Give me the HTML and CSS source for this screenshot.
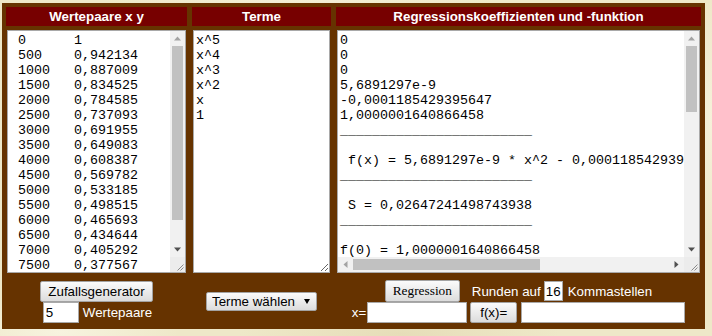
FILE: index.html
```html
<!DOCTYPE html>
<html lang="de">
<head>
    <meta charset="UTF-8">
    <title>Regression</title>
    <link rel="stylesheet" href="styles.css">
</head>
<body>
    <div class="panel">
        <div class="head">Wertepaare x y</div>
        <div class="head">Terme</div>
        <div class="head">Regressionskoeffizienten und -funktion</div>

        <div class="box">
            <div class="frame frame-werte">
                <textarea id="werte" wrap="off">
 0&#9;1
 500&#9;0,942134
 1000&#9;0,887009
 1500&#9;0,834525
 2000&#9;0,784585
 2500&#9;0,737093
 3000&#9;0,691955
 3500&#9;0,649083
 4000&#9;0,608387
 4500&#9;0,569782
 5000&#9;0,533185
 5500&#9;0,498515
 6000&#9;0,465693
 6500&#9;0,434644
 7000&#9;0,405292
 7500&#9;0,377567
 8000&#9;0,351403
</textarea>
                <div class="vbar">
                    <span class="sb-btn"><svg width="15" height="15"><path d="M4 9.5h7L7.5 5.5z" fill="#a3a3a3"/></svg></span>
                    <span class="sb-track"><span class="sb-thumb" style="height: 174px"></span></span>
                    <span class="sb-btn"><svg width="15" height="15"><path d="M4 5.5h7L7.5 9.5z" fill="#505050"/></svg></span>
                    <span class="sb-corner"><svg width="15" height="15"><path d="M13.5 7.5l-6 6M13.5 10.5l-3 3" stroke="#8a8a8a" stroke-width="1"/></svg></span>
                </div>
            </div>
        </div>
        <div class="box">
            <textarea id="terme" class="plain" wrap="off">
x^5
x^4
x^3
x^2
x
1</textarea>
        </div>
        <div class="box">
            <div class="frame frame-ergebnis">
                <textarea id="ergebnis" wrap="off">
0
0
0
5,6891297e-9
-0,0001185429395647
1,0000001640866458
________________________

 f(x) = 5,6891297e-9 * x^2 - 0,0001185429395647 * x + 1,0000001640866458
________________________

 S = 0,02647241498743938
________________________

f(0) = 1,0000001640866458
f(250) = 0,97071999
f(500) = 0,94215097
f(750) = 0,91429310
f(1000) = 0,88714635
f(1250) = 0,86071075
f(1500) = 0,83498629
f(1750) = 0,80997298
f(2000) = 0,78567080
f(2250) = 0,76207977
f(2500) = 0,73919987
f(2750) = 0,71703113
f(3000) = 0,69557351
f(3250) = 0,67482705
f(3500) = 0,65479171
f(3750) = 0,63546753
f(4000) = 0,61685448
f(4250) = 0,59895259
f(4500) = 0,58176182
f(4750) = 0,56528220
f(5000) = 0,54951370
f(5250) = 0,53445636
f(5500) = 0,52011016
f(5750) = 0,50647511
f(6000) = 0,49355119
f(6250) = 0,48133842
f(6500) = 0,46983679
f(6750) = 0,45904631
f(7000) = 0,44896694
f(7250) = 0,43959872
f(7500) = 0,43094166
f(7750) = 0,42299575
f(8000) = 0,41576094</textarea>
                <div class="vbar">
                    <span class="sb-btn"><svg width="15" height="15"><path d="M4 9.5h7L7.5 5.5z" fill="#a3a3a3"/></svg></span>
                    <span class="sb-track"><span class="sb-thumb" style="height: 66px"></span></span>
                    <span class="sb-btn"><svg width="15" height="15"><path d="M4 5.5h7L7.5 9.5z" fill="#505050"/></svg></span>
                </div>
                <div class="hbar">
                    <span class="sb-btn"><svg width="15" height="15"><path d="M9.5 4v7L5.5 7.5z" fill="#a3a3a3"/></svg></span>
                    <span class="sb-track"><span class="sb-thumb" style="width: 187px"></span></span>
                    <span class="sb-btn"><svg width="15" height="15"><path d="M5.5 4v7L9.5 7.5z" fill="#505050"/></svg></span>
                </div>
                <span class="sb-corner"><svg width="15" height="15"><path d="M13.5 7.5l-6 6M13.5 10.5l-3 3" stroke="#8a8a8a" stroke-width="1"/></svg></span>
            </div>
        </div>

        <div class="controls">
            <button class="btn btn-zufall">Zufallsgenerator</button>
            <div class="line">
                <input class="field field-anzahl" type="text" value="5">
                <span class="label label-anzahl">Wertepaare</span>
            </div>
        </div>
        <div class="controls">
            <span class="select-wrap">
                <select class="select">
                    <option>Terme wählen</option>
                    <option>linear</option>
                    <option>quadratisch</option>
                    <option>kubisch</option>
                </select>
            </span>
        </div>
        <div class="controls">
            <div class="line">
                <button class="btn btn-regression">Regression</button>
                <span class="label label-runden">Runden auf</span>
                <input class="field field-stellen" type="text" value="16">
                <span class="label label-komma">Kommastellen</span>
            </div>
            <div class="line">
                <span class="label">x=</span>
                <input class="field field-x" type="text">
                <button class="btn btn-fx">f(x)=</button>
                <input class="field field-fx" type="text">
            </div>
        </div>
    </div>
</body>
</html>
```

FILE: styles.css
```css
body {
    margin: 0;
    font-family: "Liberation Sans", Arial, sans-serif;
    font-size: 13.33px;
    background-color: #eee8c8;
    background-image:
        radial-gradient(ellipse 120px 40px at 60px 332px, #f7f3df, transparent),
        radial-gradient(ellipse 160px 30px at 400px 334px, #e6ddb8, transparent),
        radial-gradient(ellipse 20px 120px at 710px 120px, #f6f1da, transparent),
        radial-gradient(ellipse 200px 6px at 300px 1px, #f4efd6, transparent);
    height: 336px;
    overflow: hidden;
}

.panel {
    margin: 3px 0 0 2px;
    width: 703px;
    height: 326px;
    box-sizing: border-box;
    padding: 4px 4px 3px;
    background-color: #663300;
    display: grid;
    grid-template-columns: 181px 139px 365px;
    grid-template-rows: 19px 243px 1fr;
    column-gap: 5px;
    row-gap: 4px;
}

.head {
    background-color: #770000;
    color: #fff;
    font-weight: bold;
    text-align: center;
    line-height: 19px;
}

.box {
    padding: 0 1px;
    min-height: 0;
}

textarea {
    display: block;
    width: 100%;
    height: 100%;
    box-sizing: border-box;
    margin: 0;
    padding: 2px;
    border: none;
    outline: none;
    resize: none;
    overflow: hidden;
    background: #fff;
    color: #000;
    font-family: "Liberation Mono", monospace;
    font-size: 13.33px;
    line-height: 15px;
    tab-size: 8;
    white-space: pre;
}

textarea.plain {
    border: 1px solid #a9a9a9;
    resize: both;
}

/* textarea frame with drawn scrollbars */
.frame {
    height: 100%;
    box-sizing: border-box;
    border: 1px solid #a9a9a9;
    background: #fff;
    display: grid;
    grid-template-columns: minmax(0, 1fr) 15px;
    grid-template-rows: minmax(0, 1fr);
}

.frame-ergebnis {
    grid-template-rows: minmax(0, 1fr) 15px;
}

.vbar {
    display: flex;
    flex-direction: column;
    background: #f1f1f1;
}

.hbar {
    display: flex;
    background: #f1f1f1;
}

.sb-btn {
    display: block;
    width: 15px;
    height: 15px;
    flex: none;
}

.sb-btn svg,
.sb-corner svg {
    display: block;
}

.sb-track {
    flex: 1;
    display: flex;
    flex-direction: column;
}

.hbar .sb-track {
    flex-direction: row;
}

.vbar .sb-thumb {
    margin: 0 2px;
    background: #c1c1c1;
}

.hbar .sb-thumb {
    margin: 2px 0;
    background: #c1c1c1;
}

.sb-corner {
    display: block;
    width: 15px;
    height: 15px;
    background: #ececec;
}

.controls {
    display: flex;
    flex-direction: column;
    align-items: center;
    justify-content: center;
}

.line {
    display: flex;
    align-items: center;
}

.label {
    color: #fff;
    white-space: nowrap;
}

.btn {
    box-sizing: border-box;
    height: 21px;
    padding: 0;
    margin: 0;
    font-family: "Liberation Sans", Arial, sans-serif;
    font-size: 13.33px;
    color: #000;
    background: linear-gradient(#fbfbfb, #dcdcdc);
    border: 1px solid #a3a3a3;
    border-radius: 2px;
}

.btn-zufall {
    width: 113px;
}

.btn-regression {
    width: 75px;
    height: 22px;
    font-family: "Liberation Serif", "Times New Roman", serif;
}

.btn-fx {
    width: 47px;
    margin: 0 4px 0 3px;
}

.field {
    box-sizing: border-box;
    height: 21px;
    margin: 0;
    padding: 0 2px;
    border: 1px solid #a9a9a9;
    background: #fff;
    font-family: "Liberation Sans", Arial, sans-serif;
    font-size: 13.33px;
    color: #000;
}

.field-anzahl {
    width: 36px;
    margin-left: 2px;
}

.label-anzahl {
    margin-left: 4px;
}

.label-runden {
    margin-left: 12px;
}

.field-stellen {
    width: 19px;
    height: 20px;
    padding: 0 1px;
    margin: 0 5px 0 3px;
}

.field-x {
    width: 100px;
    margin-left: 1px;
}

.field-fx {
    width: 164px;
}

.select-wrap {
    position: relative;
    display: inline-block;
}

.select {
    appearance: none;
    -webkit-appearance: none;
    box-sizing: border-box;
    width: 111px;
    height: 19px;
    margin: 0;
    padding: 0 0 0 5px;
    border: 1px solid #a3a3a3;
    border-radius: 2px;
    background: linear-gradient(#fbfbfb, #dcdcdc);
    font-family: "Liberation Sans", Arial, sans-serif;
    font-size: 13.33px;
    color: #000;
}

.select-wrap::after {
    content: "";
    position: absolute;
    right: 7px;
    top: 7px;
    border-left: 3px solid transparent;
    border-right: 3px solid transparent;
    border-top: 5px solid #000;
    pointer-events: none;
}
```
